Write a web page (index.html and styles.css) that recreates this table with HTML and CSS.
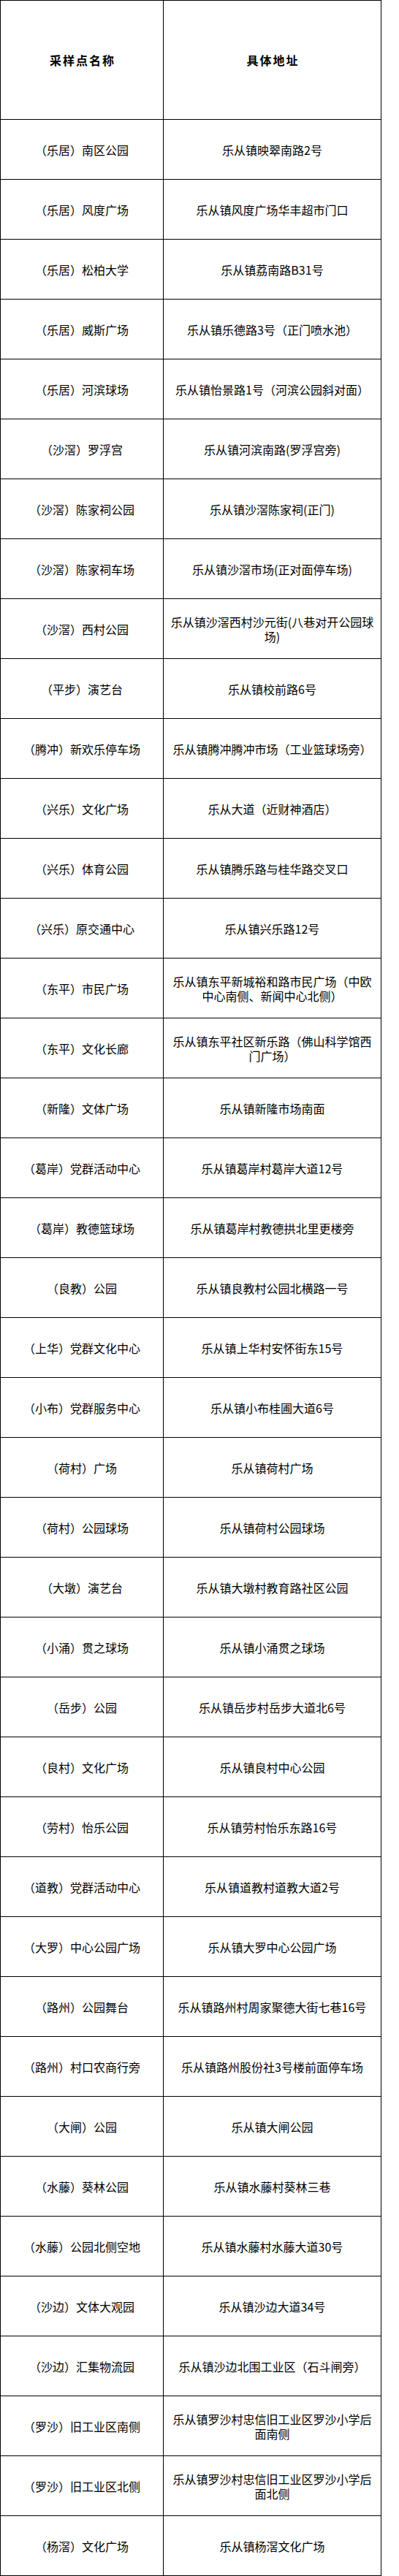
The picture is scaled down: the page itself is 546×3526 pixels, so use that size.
FILE: index.html
```html
<!DOCTYPE html>
<html lang="zh-CN">
<head>
<meta charset="utf-8">
<title>采样点</title>
<link rel="stylesheet" href="styles.css">
</head>
<body>
<div class="sheet">
  <div class="cell head">采样点名称</div><div class="cell head">具体地址</div>
  <div class="cell">（乐居）南区公园</div><div class="cell">乐从镇映翠南路2号</div>
  <div class="cell">（乐居）风度广场</div><div class="cell">乐从镇风度广场华丰超市门口</div>
  <div class="cell">（乐居）松柏大学</div><div class="cell">乐从镇荔南路B31号</div>
  <div class="cell">（乐居）威斯广场</div><div class="cell">乐从镇乐德路3号（正门喷水池）</div>
  <div class="cell">（乐居）河滨球场</div><div class="cell">乐从镇怡景路1号（河滨公园斜对面）</div>
  <div class="cell">（沙滘）罗浮宫</div><div class="cell">乐从镇河滨南路(罗浮宫旁)</div>
  <div class="cell">（沙滘）陈家祠公园</div><div class="cell">乐从镇沙滘陈家祠(正门)</div>
  <div class="cell">（沙滘）陈家祠车场</div><div class="cell">乐从镇沙滘市场(正对面停车场)</div>
  <div class="cell">（沙滘）西村公园</div><div class="cell">乐从镇沙滘西村沙元街(八巷对开公园球<br>场)</div>
  <div class="cell">（平步）演艺台</div><div class="cell">乐从镇校前路6号</div>
  <div class="cell">（腾冲）新欢乐停车场</div><div class="cell">乐从镇腾冲腾冲市场（工业篮球场旁）</div>
  <div class="cell">（兴乐）文化广场</div><div class="cell">乐从大道（近财神酒店）</div>
  <div class="cell">（兴乐）体育公园</div><div class="cell">乐从镇腾乐路与桂华路交叉口</div>
  <div class="cell">（兴乐）原交通中心</div><div class="cell">乐从镇兴乐路12号</div>
  <div class="cell">（东平）市民广场</div><div class="cell">乐从镇东平新城裕和路市民广场（中欧<br>中心南侧、新闻中心北侧）</div>
  <div class="cell">（东平）文化长廊</div><div class="cell">乐从镇东平社区新乐路（佛山科学馆西<br>门广场）</div>
  <div class="cell">（新隆）文体广场</div><div class="cell">乐从镇新隆市场南面</div>
  <div class="cell">（葛岸）党群活动中心</div><div class="cell">乐从镇葛岸村葛岸大道12号</div>
  <div class="cell">（葛岸）教德篮球场</div><div class="cell">乐从镇葛岸村教德拱北里更楼旁</div>
  <div class="cell">（良教）公园</div><div class="cell">乐从镇良教村公园北横路一号</div>
  <div class="cell">（上华）党群文化中心</div><div class="cell">乐从镇上华村安怀街东15号</div>
  <div class="cell">（小布）党群服务中心</div><div class="cell">乐从镇小布桂圃大道6号</div>
  <div class="cell">（荷村）广场</div><div class="cell">乐从镇荷村广场</div>
  <div class="cell">（荷村）公园球场</div><div class="cell">乐从镇荷村公园球场</div>
  <div class="cell">（大墩）演艺台</div><div class="cell">乐从镇大墩村教育路社区公园</div>
  <div class="cell">（小涌）贯之球场</div><div class="cell">乐从镇小涌贯之球场</div>
  <div class="cell">（岳步）公园</div><div class="cell">乐从镇岳步村岳步大道北6号</div>
  <div class="cell">（良村）文化广场</div><div class="cell">乐从镇良村中心公园</div>
  <div class="cell">（劳村）怡乐公园</div><div class="cell">乐从镇劳村怡乐东路16号</div>
  <div class="cell">（道教）党群活动中心</div><div class="cell">乐从镇道教村道教大道2号</div>
  <div class="cell">（大罗）中心公园广场</div><div class="cell">乐从镇大罗中心公园广场</div>
  <div class="cell">（路州）公园舞台</div><div class="cell">乐从镇路州村周家聚德大街七巷16号</div>
  <div class="cell">（路州）村口农商行旁</div><div class="cell">乐从镇路州股份社3号楼前面停车场</div>
  <div class="cell">（大闸）公园</div><div class="cell">乐从镇大闸公园</div>
  <div class="cell">（水藤）葵林公园</div><div class="cell">乐从镇水藤村葵林三巷</div>
  <div class="cell">（水藤）公园北侧空地</div><div class="cell">乐从镇水藤村水藤大道30号</div>
  <div class="cell">（沙边）文体大观园</div><div class="cell">乐从镇沙边大道34号</div>
  <div class="cell">（沙边）汇集物流园</div><div class="cell">乐从镇沙边北围工业区（石斗闸旁）</div>
  <div class="cell">（罗沙）旧工业区南侧</div><div class="cell">乐从镇罗沙村忠信旧工业区罗沙小学后<br>面南侧</div>
  <div class="cell">（罗沙）旧工业区北侧</div><div class="cell">乐从镇罗沙村忠信旧工业区罗沙小学后<br>面北侧</div>
  <div class="cell">（杨滘）文化广场</div><div class="cell">乐从镇杨滘文化广场</div>
</div>
</body>
</html>
```
FILE: styles.css
```css
html, body {
  margin: 0;
  padding: 0;
  background: #fff;
}

.sheet {
  display: grid;
  grid-template-columns: 222px 297px;
  grid-template-rows: 162px;
  grid-auto-rows: 81px;
  gap: 1px;
  padding: 1px;
  background: #000;
  width: max-content;
  font-family: "Noto Sans CJK SC", "Noto Sans", sans-serif;
  font-size: 16px;
  line-height: 20px;
  color: #000;
}

.cell {
  background: #fff;
  display: flex;
  align-items: center;
  justify-content: center;
  text-align: center;
  padding: 0 3px;
  white-space: nowrap;
}

.head {
  font-weight: 700;
  letter-spacing: 2px;
  padding-left: 5px;
}
```
